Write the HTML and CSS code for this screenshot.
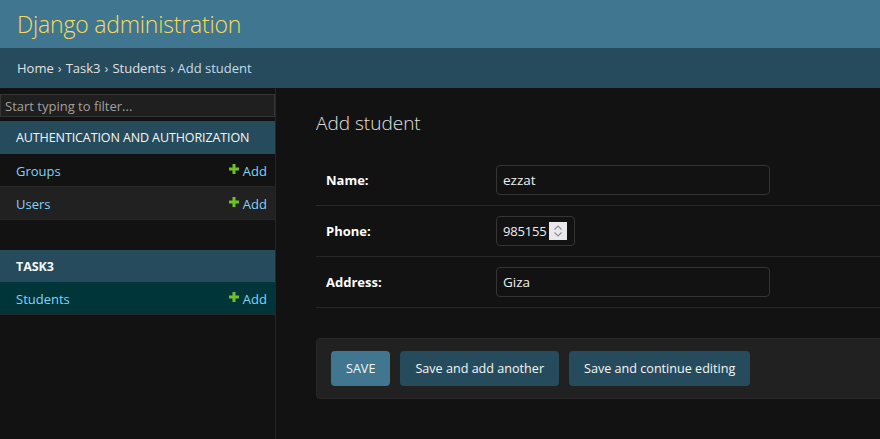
FILE: index.html
```html
<!DOCTYPE html>
<html lang="en">
<head>
<meta charset="utf-8">
<title>Add student | Django site admin</title>
<link rel="stylesheet" href="styles.css">
</head>
<body>
<header class="header">
  <h1 class="branding">Django administration</h1>
</header>
<nav class="breadcrumbs">
  <a href="#">Home</a> › <a href="#">Task3</a> › <a href="#">Students</a> › Add student
</nav>
<div class="main">
  <aside class="sidebar">
    <input class="filter" type="search" placeholder="Start typing to filter...">
    <div class="module">
      <div class="caption">AUTHENTICATION AND AUTHORIZATION</div>
      <div class="row"><a class="model" href="#">Groups</a><a class="addlink" href="#"><svg class="plus" viewBox="0 0 10 10" width="10" height="10"><path d="M3.5 0h3v3.5H10v3H6.5V10h-3V6.5H0v-3h3.5z" fill="#70bf2b"/></svg>Add</a></div>
      <div class="row row-alt"><a class="model" href="#">Users</a><a class="addlink" href="#"><svg class="plus" viewBox="0 0 10 10" width="10" height="10"><path d="M3.5 0h3v3.5H10v3H6.5V10h-3V6.5H0v-3h3.5z" fill="#70bf2b"/></svg>Add</a></div>
    </div>
    <div class="module">
      <div class="caption caption-current">TASK3</div>
      <div class="row row-current"><a class="model" href="#">Students</a><a class="addlink" href="#"><svg class="plus" viewBox="0 0 10 10" width="10" height="10"><path d="M3.5 0h3v3.5H10v3H6.5V10h-3V6.5H0v-3h3.5z" fill="#70bf2b"/></svg>Add</a></div>
    </div>
  </aside>
  <main class="content">
    <h1 class="title">Add student</h1>
    <form class="form">
      <div class="form-row">
        <label class="label">Name:</label>
        <input class="field" type="text" value="ezzat">
      </div>
      <div class="form-row">
        <label class="label">Phone:</label>
        <div class="numfield"><span class="numval">985155</span><span class="spin"><svg viewBox="0 0 18 18" width="18" height="18"><path d="M5.5 7.5L9 4l3.5 3.5M5.5 10.5L9 14l3.5-3.5" fill="none" stroke="#8e8e96" stroke-width="1.2"/></svg></span></div>
      </div>
      <div class="form-row">
        <label class="label">Address:</label>
        <input class="field" type="text" value="Giza">
      </div>
      <div class="submit-row">
        <button class="btn btn-default" type="button">SAVE</button>
        <button class="btn" type="button">Save and add another</button>
        <button class="btn" type="button">Save and continue editing</button>
      </div>
    </form>
  </main>
</div>
</body>
</html>
```

FILE: styles.css
```css
html, body {
  margin: 0;
  padding: 0;
  height: 100%;
  overflow: hidden;
}
body {
  background: #121212;
  color: #eeeeee;
  font-family: "Open Sans", "Noto Sans", sans-serif;
  font-size: 13px;
}
a { text-decoration: none; }

.header {
  height: 48px;
  background: #417690;
  display: flex;
  align-items: center;
  padding: 0 17px;
}
.branding {
  margin: 0;
  font-size: 23px;
  font-weight: 300;
  color: #f5dd5d;
  letter-spacing: -0.2px;
}

.breadcrumbs {
  height: 40px;
  box-sizing: border-box;
  background: #264b5d;
  color: #c4dce8;
  display: flex;
  align-items: center;
  gap: 4px;
  padding: 0 17px;
  font-size: 13px;
}
.breadcrumbs a { color: #e0e0e0; }

.main {
  display: flex;
  height: calc(100% - 88px);
}

.sidebar {
  width: 275px;
  flex: none;
  border-right: 1px solid #262626;
  padding-top: 6px;
}
.filter {
  display: block;
  box-sizing: border-box;
  width: 275px;
  height: 23px;
  margin: 0 0 4px 0;
  padding: 0 4px;
  background: #1f1f1f;
  border: 1px solid #353535;
  color: #eee;
  font-family: inherit;
  font-size: 13px;
}
.filter::placeholder { color: #a0a0a0; }

.module { margin-bottom: 30px; }
.caption {
  height: 33px;
  box-sizing: border-box;
  background: #264b5d;
  color: #f7f7f7;
  display: flex;
  align-items: center;
  padding: 0 16px;
  font-size: 12.5px;
  letter-spacing: -0.1px;
}
.caption-current { font-weight: 700; height: 32px; }
.row {
  height: 33px;
  box-sizing: border-box;
  border-bottom: 1px solid #272727;
  display: flex;
  align-items: center;
  justify-content: space-between;
  padding: 1px 8px 0 16px;
}
.row-alt { background: #212121; }
.row-current { background: #00363a; }
.model { color: #81d4fa; }
.addlink {
  color: #81d4fa;
  display: flex;
  align-items: center;
  gap: 4px;
}
.plus { margin-top: -4px; }

.content {
  flex: 1;
  padding: 22px 0 0 40px;
  min-width: 0;
}
.title {
  margin: 0 0 19px 0;
  font-size: 19px;
  font-weight: 300;
  color: #e0e0e0;
  line-height: 26px;
}
.form-row {
  display: flex;
  align-items: center;
  padding: 10px;
  border-bottom: 1px solid #272727;
}
.label {
  width: 170px;
  flex: none;
  font-weight: 700;
  color: #ffffff;
  font-size: 13px;
}
.field {
  box-sizing: border-box;
  width: 274px;
  height: 30px;
  background: #121212;
  border: 1px solid #353535;
  border-radius: 4px;
  color: #eeeeee;
  padding: 0 6px;
  font-family: inherit;
  font-size: 13.5px;
}
.numfield {
  box-sizing: border-box;
  width: 79px;
  height: 30px;
  border: 1px solid #353535;
  border-radius: 4px;
  display: flex;
  align-items: center;
  padding: 0 6px;
  gap: 3px;
  font-size: 13px;
  letter-spacing: -0.2px;
}
.spin {
  display: flex;
  width: 18px;
  height: 18px;
  background: #e9e9ed;
}

.submit-row {
  margin: 30px -6px 0 0;
  padding: 12px 14px;
  background: #212121;
  border: 1px solid #272727;
  border-radius: 4px;
  display: flex;
  gap: 10px;
}
.btn {
  height: 35px;
  padding: 0 15px;
  border: 0;
  border-radius: 4px;
  background: #264b5d;
  color: #f7f7f7;
  font-family: inherit;
  font-size: 12.6px;
}
.btn-default { background: #417690; }
```
